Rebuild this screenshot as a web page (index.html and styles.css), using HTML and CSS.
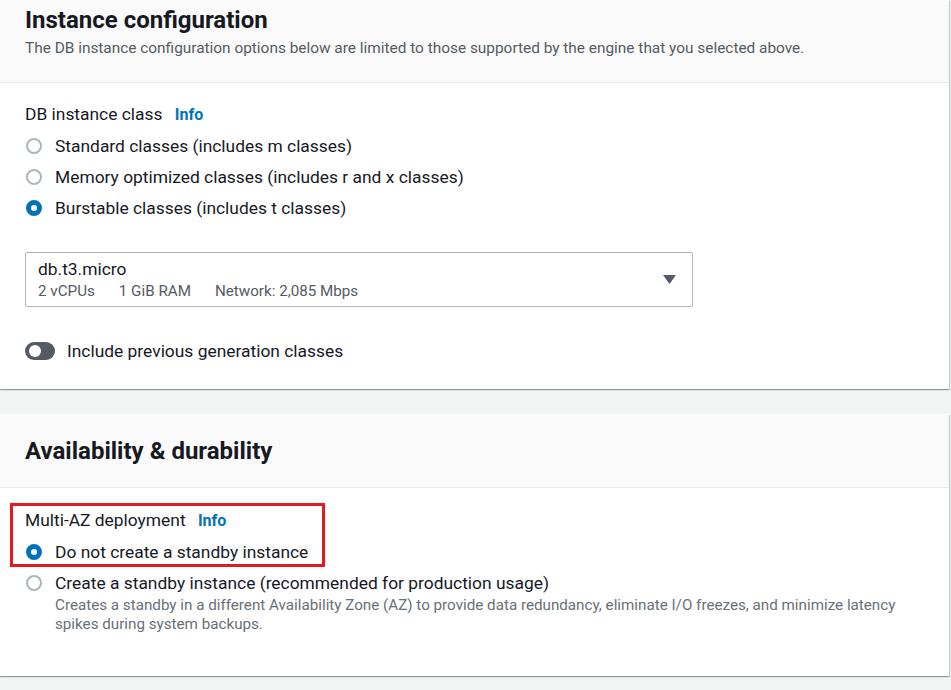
FILE: index.html
```html
<!DOCTYPE html>
<html lang="en">
<head>
    <meta charset="UTF-8">
    <meta name="viewport" content="width=device-width, initial-scale=1.0">
    <title>Create database</title>
    <link rel="stylesheet" href="styles.css">
</head>
<body>
    <div class="page">
        <div class="card card-first">
            <div class="card-header">
                <h2>Instance configuration</h2>
                <p class="header-desc">The DB instance configuration options below are limited to those supported by the engine that you selected above.</p>
            </div>
            <div class="card-body">
                <div class="field-label">DB instance class <a class="info">Info</a></div>
                <div class="radio-group">
                    <label class="radio-row"><span class="radio"></span>Standard classes (includes m classes)</label>
                    <label class="radio-row"><span class="radio"></span>Memory optimized classes (includes r and x classes)</label>
                    <label class="radio-row"><span class="radio checked"></span>Burstable classes (includes t classes)</label>
                </div>
                <div class="select">
                    <div class="select-text">
                        <div class="select-value">db.t3.micro</div>
                        <div class="select-tags">
                            <span>2 vCPUs</span>
                            <span>1 GiB RAM</span>
                            <span>Network: 2,085 Mbps</span>
                        </div>
                    </div>
                    <svg class="caret" width="13" height="9" viewBox="0 0 13 9"><path d="M0 0h13L6.5 9z" fill="#545b64"/></svg>
                </div>
                <div class="toggle-row">
                    <span class="toggle"><span class="knob"></span></span>
                    Include previous generation classes
                </div>
            </div>
        </div>

        <div class="card card-second">
            <div class="card-header">
                <h2>Availability &amp; durability</h2>
            </div>
            <div class="card-body">
                <div class="highlight-wrap">
                    <div class="field-label">Multi-AZ deployment <a class="info">Info</a></div>
                    <div class="radio-group">
                        <label class="radio-row"><span class="radio checked"></span>Do not create a standby instance</label>
                    </div>
                    <div class="highlight"></div>
                </div>
                <div class="radio-group second-option">
                    <label class="radio-row"><span class="radio"></span>Create a standby instance (recommended for production usage)</label>
                    <p class="radio-desc">Creates a standby in a different Availability Zone (AZ) to provide data redundancy, eliminate I/O freezes, and minimize latency spikes during system backups.</p>
                </div>
            </div>
        </div>
    </div>
</body>
</html>
```

FILE: styles.css
```css
body {
    margin: 0;
    background: #f2f3f3;
    font-family: Roboto, "Liberation Sans", Arial, sans-serif;
    color: #16191f;
    font-size: 17.4px;
}
.page {
    width: 949px;
    padding-bottom: 40px;
}
.card {
    background: #fff;
    box-shadow: 0 1px 1px 0 rgba(0, 28, 36, 0.3), 1px 1px 1px 0 rgba(0, 28, 36, 0.15);
}
.card-second {
    margin-top: 25px;
}
.card-header {
    background: #fafafa;
    border-bottom: 1px solid #eaeded;
    padding: 6px 25px 0;
}
.card-first .card-header {
    height: 76px;
}
.card-second .card-header {
    height: 66px;
    display: flex;
    align-items: center;
    padding-top: 4px;
    padding-bottom: 3px;
}
h2 {
    margin: 0;
    font-size: 24px;
    line-height: 28px;
    font-weight: 700;
}
.header-desc {
    margin: 4px 0 0;
    font-size: 15.4px;
    line-height: 20px;
    color: #545b64;
}
.card-body {
    padding: 20px 25px 27px;
}
.card-second .card-body {
    padding: 21px 25px 42px;
}
.field-label {
    line-height: 22px;
}
.info {
    color: #0073bb;
    font-weight: 700;
    font-size: 16px;
    margin-left: 8px;
}
.radio-group {
    display: flex;
    flex-direction: column;
    gap: 9px;
    margin-top: 9px;
}
.radio-row {
    display: flex;
    align-items: center;
    line-height: 22px;
}
.radio {
    width: 16px;
    height: 16px;
    box-sizing: border-box;
    border: 2px solid #aab7b8;
    border-radius: 50%;
    margin-left: 1px;
    margin-right: 13px;
    flex-shrink: 0;
}
.radio.checked {
    border: 5px solid #0073bb;
    background: #fff;
}
.select {
    margin-top: 33px;
    width: 668px;
    height: 55px;
    box-sizing: border-box;
    border: 1px solid #aab7b8;
    border-radius: 2px;
    display: flex;
    align-items: center;
    justify-content: space-between;
    padding: 0 16px 0 12px;
}
.select-value {
    line-height: 22px;
}
.select-tags {
    display: flex;
    gap: 24px;
    font-size: 15.2px;
    line-height: 20px;
    color: #545b64;
    margin-top: 1px;
}
.toggle-row {
    margin-top: 33px;
    display: flex;
    align-items: center;
    line-height: 22px;
}
.toggle {
    width: 30px;
    height: 18px;
    border-radius: 9px;
    background: #545b64;
    margin-right: 12px;
    display: flex;
    align-items: center;
    padding-left: 4px;
    box-sizing: border-box;
}
.knob {
    width: 12px;
    height: 12px;
    border-radius: 50%;
    background: #fff;
}
.highlight-wrap {
    position: relative;
}
.highlight {
    position: absolute;
    left: -15px;
    top: -6px;
    width: 309px;
    height: 58px;
    border: 3px solid #e21b23;
}
.second-option {
    margin-top: 9px;
    gap: 0;
}
.radio-desc {
    margin: 2px 0 0;
    padding-left: 30px;
    max-width: 860px;
    font-size: 15.2px;
    line-height: 19px;
    color: #687078;
}
```
